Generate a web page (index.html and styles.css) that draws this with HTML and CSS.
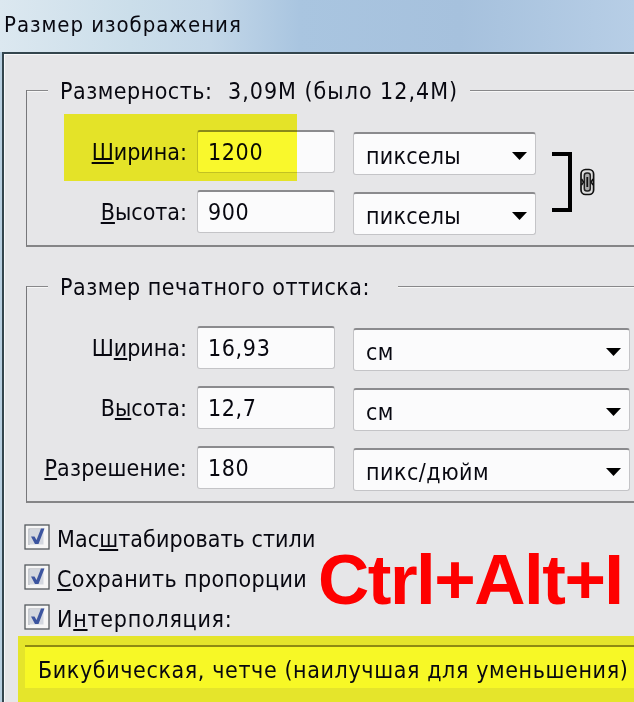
FILE: index.html
```html
<!DOCTYPE html>
<html lang="ru">
<head>
<meta charset="utf-8">
<title>Размер изображения</title>
<link rel="stylesheet" href="styles.css">
</head>
<body>
<div class="window">
  <header class="titlebar"><span class="t-title">Размер изображения</span></header>
  <main class="panel">
    <section class="group pixels">
      <div class="legend"><i class="dash"></i><span class="t-dim">Размерность:</span><span class="t-size">3,09M (было 12,4M)</span><i class="rule"></i></div>
      <div class="body">
        <div class="rows">
          <div class="row"><label class="t-w"><u>Ш</u>ирина:</label><div class="input">1200</div><div class="select"><span class="t-px">пикселы</span><i class="arrow"></i></div></div>
          <div class="row"><label class="t-h"><u>В</u>ысота:</label><div class="input">900</div><div class="select"><span class="t-px">пикселы</span><i class="arrow"></i></div></div>
        </div>
        <svg class="link" width="46" height="60" viewBox="0 0 46 60">
          <path d="M0 2H18V58H0" fill="none" stroke="#000" stroke-width="4"/>
          <rect x="29" y="17.500" width="12.600" height="25" rx="4.500" fill="#ddd" stroke="#111" stroke-width="1.700"/>
          <rect x="32.300" y="21" width="6" height="18" rx="2.500" fill="#aaa" stroke="#222" stroke-width="1.500"/>
          <path d="M35.300 25V35" stroke="#111" stroke-width="1.800"/>
          <path d="M29.500 27L31.500 30L29.500 33M41.100 27L39.100 30L41.100 33" fill="none" stroke="#111" stroke-width="1.600"/>
        </svg>
      </div>
      <div class="marker marker-width"></div>
    </section>
    <section class="group print">
      <div class="legend"><i class="dash"></i><span class="t-print">Размер печатного оттиска:</span><i class="rule"></i></div>
      <div class="rows">
        <div class="row"><label class="t-w">Ш<u>и</u>рина:</label><div class="input">16,93</div><div class="select wide"><span class="t-px">см</span><i class="arrow"></i></div></div>
        <div class="row"><label class="t-h">В<u>ы</u>сота:</label><div class="input">12,7</div><div class="select wide"><span class="t-px">см</span><i class="arrow"></i></div></div>
        <div class="row"><label class="t-res"><u>Р</u>азрешение:</label><div class="input">180</div><div class="select wide"><span class="t-ppi">пикс/дюйм</span><i class="arrow"></i></div></div>
      </div>
    </section>
    <section class="options">
      <div class="checks">
        <div class="check"><svg class="box" viewBox="0 0 26 26"><use href="#tick"/></svg><span class="t-scale">Мас<u>ш</u>табировать стили</span></div>
        <div class="check"><svg class="box" viewBox="0 0 26 26"><use href="#tick"/></svg><span class="t-keep"><u>С</u>охранить пропорции</span></div>
        <div class="check"><svg class="box" viewBox="0 0 26 26"><use href="#tick"/></svg><span class="t-interp">И<u>н</u>терполяция:</span></div>
      </div>
      <div class="hotkey">Ctrl+Alt+I</div>
    </section>
    <div class="method"><div class="method-field"><span class="t-method">Бикубическая, четче (наилучшая для уменьшения)</span></div></div>
  </main>
</div>
<svg class="defs" width="0" height="0">
  <defs>
    <g id="tick">
      <rect x="1" y="1" width="24" height="24" fill="#f6f6f6" stroke="#555a5e" stroke-width="1.300"/>
      <path d="M5 21V5H20" fill="none" stroke="#a9aeb6" stroke-width="1.200"/>
      <rect x="5.500" y="5.500" width="14" height="15" fill="#d3d7df"/>
      <path d="M7 12.500H10.500L12.500 16L17 4.500H20.500L14.500 20H11Z" fill="#3c55a0"/>
    </g>
  </defs>
</svg>
</body>
</html>
```
FILE: styles.css
```css
* { box-sizing: border-box; }
body {
  margin: 0;
  width: 634px;
  height: 702px;
  overflow: hidden;
  font-family: "DejaVu Sans Condensed", "DejaVu Sans", sans-serif;
  font-stretch: condensed;
  font-size: 23px;
  line-height: 28px;
  color: #080810;
  white-space: nowrap;
}
u {
  text-decoration-thickness: 2px;
  text-underline-offset: 2px;
  text-decoration-skip-ink: none;
}
.defs { position: absolute; }
.window {
  height: 702px;
  background: #b8cfe0;
  padding-left: 2px;
  display: flex;
  flex-direction: column;
}
.titlebar {
  height: 52px;
  flex: none;
  margin-left: -2px;
  padding: 11px 0 0 4px;
  font-size: 22px;
  letter-spacing: .95px;
  background: linear-gradient(90deg, #dce8f0 0, #cbdeea 130px, #c3d7e8 210px, #a9c5e0 300px, #a6c1dd 460px, #b7cee6 634px);
}
.panel {
  flex: 1;
  min-height: 0;
  border-left: 2px solid #33454d;
  border-top: 2px solid #33454d;
  background: #e6e6e8;
  box-shadow: inset 1px 1px 0 #f8f8f9;
}
.group {
  position: relative;
  margin-left: 22px;
  border-left: 1px solid #77777a;
  border-bottom: 2px solid #858587;
}
.pixels { margin-top: 36px; height: 157px; }
.print { margin-top: 39px; height: 217px; }
.legend {
  height: 2px;
  display: flex;
  align-items: center;
}
.legend span { line-height: 28px; }
.dash, .rule { height: 2px; background: #88888a; border-bottom: 1px solid #f7f7f7; }
.dash { width: 21px; margin-right: 12px; }
.rule { flex: 1; }
.t-dim { width: 168px; letter-spacing: .5px; }
.t-size { width: 242px; letter-spacing: 1px; }
.t-print { width: 338px; letter-spacing: .5px; }
.t-res { letter-spacing: .2px; }
.t-px { letter-spacing: .25px; }
.t-ppi { letter-spacing: .5px; }
.t-scale { letter-spacing: .08px; }
.t-keep { letter-spacing: .4px; }
.t-interp { letter-spacing: .75px; }
.t-method { letter-spacing: .61px; }
.body { display: flex; gap: 16px; }
.rows { padding-top: 38px; display: flex; flex-direction: column; gap: 18px; }
.row { display: flex; height: 42px; align-items: flex-start; }
.row label {
  width: 170px;
  padding: 8px 10px 0 0;
  text-align: right;
}
.input, .select {
  height: 43px;
  background: #fbfbfc;
  border: 1px solid #c4c4c7;
  border-top: 2px solid #8b8b8e;
  border-radius: 3px;
  flex: none;
}
.input { width: 138px; padding: 6px 0 0 10px; letter-spacing: .65px; }
.select {
  width: 183px;
  margin: 2px 0 0 18px;
  padding: 8px 8px 0 12px;
  display: flex;
  justify-content: space-between;
}
.wide { width: 277px; }
.arrow {
  width: 15px;
  height: 8px;
  margin-top: 10px;
  background: #000;
  clip-path: polygon(0 0, 100% 0, 50% 100%);
}
.link { margin-top: 60px; }
.marker-width {
  position: absolute;
  left: 37px;
  top: 24px;
  width: 233px;
  height: 67px;
  background: #fdfc2c;
  mix-blend-mode: multiply;
}
.options {
  display: flex;
  height: 133px;
  padding: 21px 0 0 20px;
}
.checks { width: 294px; display: flex; flex-direction: column; gap: 14px; }
.check { height: 26px; display: flex; gap: 7px; }
.check span { line-height: 30px; }
.box { width: 26px; height: 26px; flex: none; }
.hotkey {
  font: bold 71px/76px "Liberation Sans", Arial, sans-serif;
  letter-spacing: -1.5px;
  color: #fe0000;
  padding-top: 18px;
}
.method {
  margin-left: 14px;
  height: 66px;
  padding: 9px 0 0 7px;
  background: #e5e52b;
}
.method-field {
  height: 43px;
  border-top: 2px solid #8f8a12;
  background: #f7f826;
  padding: 9px 0 0 13px;
}
```
